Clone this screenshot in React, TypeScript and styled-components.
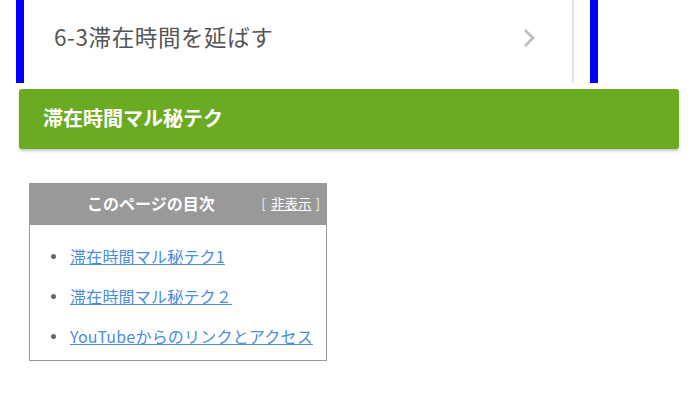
import styled, { createGlobalStyle } from 'styled-components';

const GlobalStyle = createGlobalStyle`
  html, body {
    margin: 0;
    padding: 0;
    background: #ffffff;
  }
  body {
    font-family: 'Noto Sans CJK JP', 'Noto Sans', sans-serif;
  }
`;

const Page = styled.div`
  width: 700px;
  height: 396px;
  overflow: hidden;
  background: #ffffff;
`;

const NavFrame = styled.div`
  margin-left: 16px;
  width: 566px;
  height: 83px;
  border-left: 8px solid #0000ff;
  border-right: 8px solid #0000ff;
  display: flex;
`;

const NavCard = styled.div`
  width: 550px;
  border-right: 2px solid #e3e3e3;
  display: flex;
  align-items: center;
  justify-content: space-between;
  padding: 0 36px 12px 30px;
  box-sizing: border-box;
`;

const NavText = styled.span`
  font-size: 22.5px;
  color: #555555;
  letter-spacing: 0.6px;
`;

const Chevron = styled.svg`
  width: 14px;
  height: 22px;
  margin-top: 4px;
`;

const SectionHeading = styled.h2`
  margin: 6px 21px 0 19px;
  height: 60px;
  box-sizing: border-box;
  padding: 0 0 4px 24px;
  display: flex;
  align-items: center;
  background: #6aab22;
  border-radius: 3px;
  box-shadow: 0 2px 3px rgba(0, 0, 0, 0.22);
  color: #ffffff;
  font-size: 20px;
  font-weight: 700;
`;

const Toc = styled.div`
  margin: 34px 0 0 29px;
  width: 298px;
  border: 1px solid #999999;
  box-sizing: border-box;
`;

const TocHeader = styled.div`
  height: 41px;
  box-sizing: border-box;
  background: #999999;
  display: flex;
  align-items: center;
  padding: 0 5px 3px 57px;
  justify-content: space-between;
`;

const TocTitle = styled.span`
  color: #ffffff;
  font-size: 16px;
  font-weight: 700;
`;

const TocToggle = styled.span`
  color: #eeeeee;
  font-size: 13.5px;
  letter-spacing: 1px;

  a {
    color: #ffffff;
    text-decoration: underline;
    letter-spacing: 0;
  }
`;

const TocList = styled.ul`
  margin: 0;
  padding: 11px 0 4px 40px;
  list-style: none;
`;

const TocItem = styled.li`
  position: relative;
  height: 40px;
  line-height: 40px;
  font-size: 16px;
  letter-spacing: 0.2px;

  &::before {
    content: '';
    position: absolute;
    left: -19px;
    top: 18px;
    width: 5px;
    height: 5px;
    border-radius: 50%;
    background: #666666;
  }

  a {
    color: #4a8ddc;
    text-decoration: underline;
  }
`;

const items = ['滞在時間マル秘テク1', '滞在時間マル秘テク２', 'YouTubeからのリンクとアクセス'];

export default function App() {
  return (
    <Page>
      <GlobalStyle />
      <NavFrame>
        <NavCard>
          <NavText>6-3滞在時間を延ばす</NavText>
          <Chevron viewBox="0 0 14 22">
            <path d="M3 3 L11 11 L3 19" fill="none" stroke="#bdbdbd" strokeWidth="2.6" />
          </Chevron>
        </NavCard>
      </NavFrame>
      <SectionHeading>滞在時間マル秘テク</SectionHeading>
      <Toc>
        <TocHeader>
          <TocTitle>このページの目次</TocTitle>
          <TocToggle>
            [ <a href="#">非表示</a> ]
          </TocToggle>
        </TocHeader>
        <TocList>
          {items.map((item) => (
            <TocItem key={item}>
              <a href="#">{item}</a>
            </TocItem>
          ))}
        </TocList>
      </Toc>
    </Page>
  );
}
